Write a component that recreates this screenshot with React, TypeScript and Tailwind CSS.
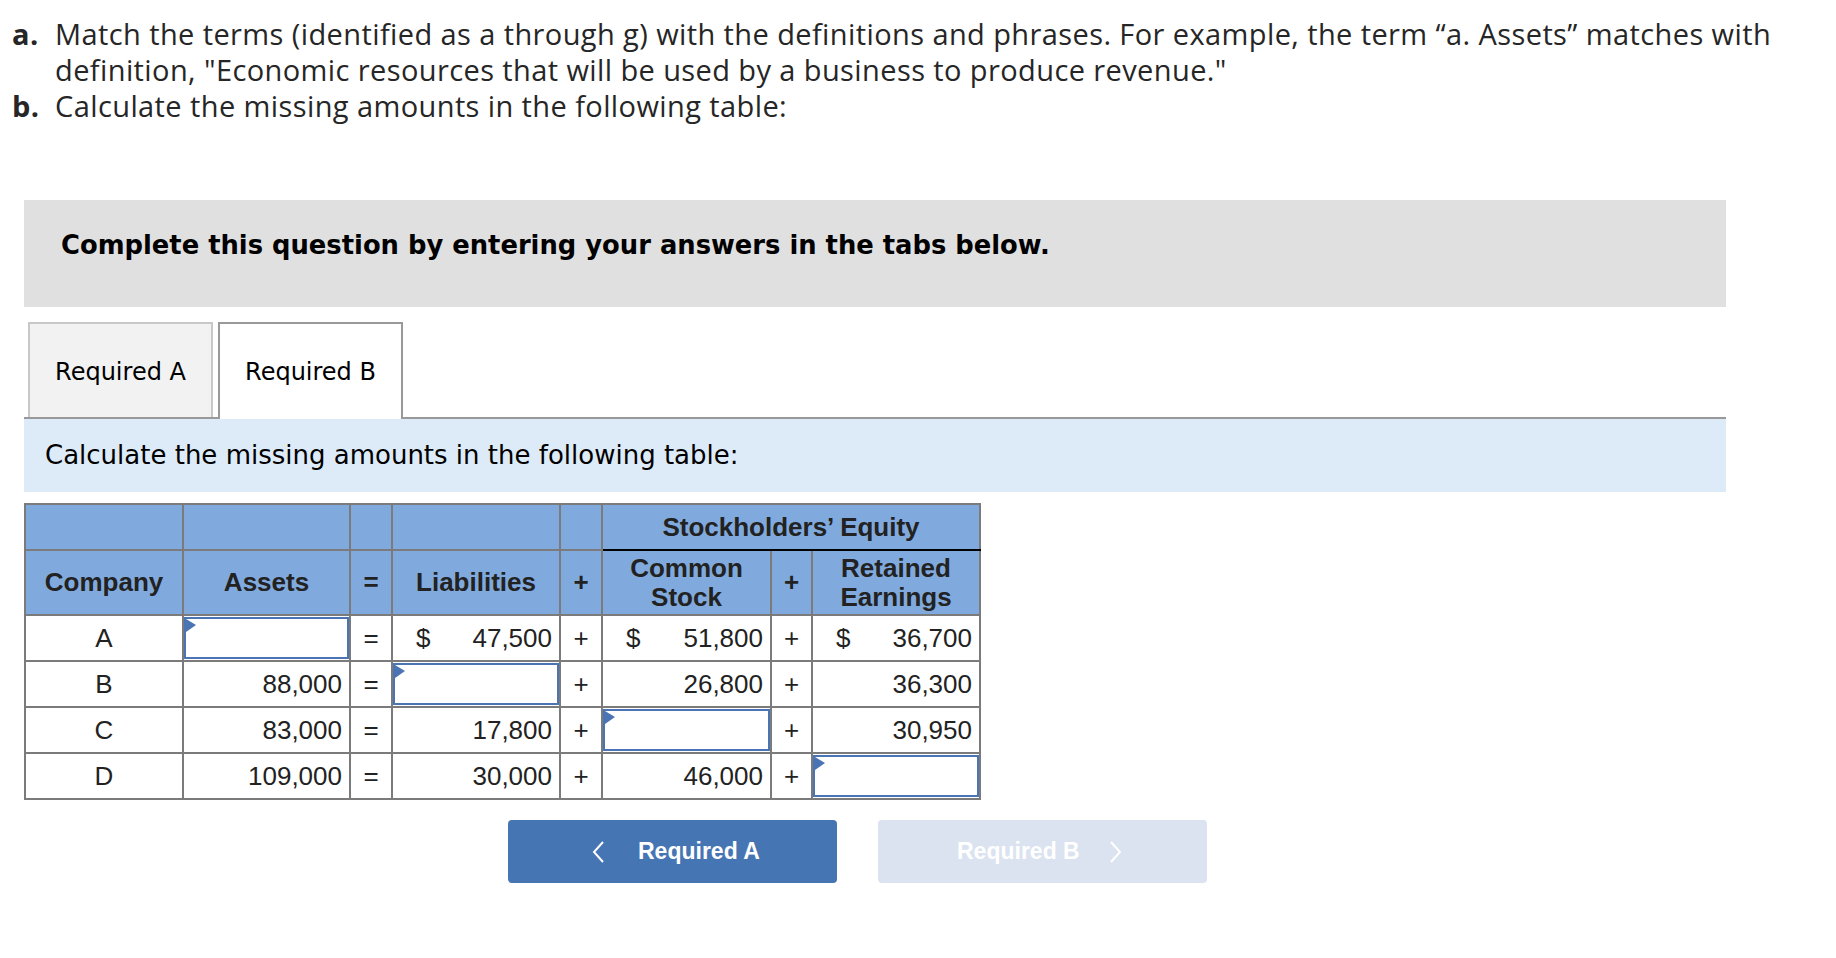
import React from 'react'

type Cell = { v: string | null; dollar?: boolean }

const rows: { co: string; cells: Cell[] }[] = [
    { co: 'A', cells: [{ v: null }, { v: '47,500', dollar: true }, { v: '51,800', dollar: true }, { v: '36,700', dollar: true }] },
    { co: 'B', cells: [{ v: '88,000' }, { v: null }, { v: '26,800' }, { v: '36,300' }] },
    { co: 'C', cells: [{ v: '83,000' }, { v: '17,800' }, { v: null }, { v: '30,950' }] },
    { co: 'D', cells: [{ v: '109,000' }, { v: '30,000' }, { v: '46,000' }, { v: null }] },
]

const bd = 'border-2 border-[#7b7b7b]'

function InputBox() {
    return (
        <div className="relative h-[42px] border-2 border-[#4a74b4] bg-white">
            <svg className="absolute left-0 top-0" width="10" height="14" viewBox="0 0 10 14">
                <polygon points="0,0 10,6 0,13" fill="#4a74b4" />
            </svg>
        </div>
    )
}

function ValueCell({ c }: { c: Cell }) {
    if (c.v === null) {
        return (
            <td className={`${bd} p-0`}>
                <InputBox />
            </td>
        )
    }
    return (
        <td className={`${bd} px-[7px]`}>
            <div className="flex justify-between">
                {c.dollar ? <span className="pl-[16px]">$</span> : <span />}
                <span>{c.v}</span>
            </div>
        </td>
    )
}

function Chevron({ dir }: { dir: 'left' | 'right' }) {
    return (
        <svg width="12" height="22" viewBox="0 0 12 22" fill="none" stroke="white" strokeWidth="2">
            {dir === 'left' ? <polyline points="11,1 2,11 11,21" /> : <polyline points="1,1 10,11 1,21" />}
        </svg>
    )
}

export default function App() {
    return (
        <div className="min-h-screen bg-white pb-10 text-[#222]">
            <div className="pl-3 pt-4 font-['Open_Sans',Arial,sans-serif] text-[29px] leading-[36px] tracking-[0.4px] text-[#262626]">
                <div className="flex">
                    <span className="w-[43px] shrink-0 font-bold">a.</span>
                    <div>
                        Match the terms (identified as a through g) with the definitions and phrases. For example, the term “a. Assets” matches with
                        <br />
                        definition, "Economic resources that will be used by a business to produce revenue."
                    </div>
                </div>
                <div className="flex">
                    <span className="w-[43px] shrink-0 font-bold">b.</span>
                    <div>Calculate the missing amounts in the following table:</div>
                </div>
            </div>

            <div className="ml-[24px] mt-[76px] w-[1702px]">
                <div className="h-[107px] bg-[#e0e0e0] pl-[37px] pt-[29px] font-['DejaVu_Sans',Verdana,sans-serif] text-[25.8px] font-bold leading-[32px] text-black">
                    Complete this question by entering your answers in the tabs below.
                </div>

                <div className="mt-[15px] flex items-end gap-[5px] border-b-2 border-[#999] pl-[4px] font-['DejaVu_Sans',Verdana,sans-serif] text-[24px] text-black">
                    <div className="flex h-[95px] w-[185px] items-center justify-center border-2 border-b-0 border-[#c8c8c8] bg-[#f2f2f2] pt-[2px]">
                        Required A
                    </div>
                    <div className="-mb-[2px] flex h-[97px] w-[185px] items-center justify-center border-2 border-b-0 border-[#999] bg-white">
                        Required B
                    </div>
                </div>

                <div className="flex h-[73px] items-center bg-[#ddebf8] pl-[21px] font-['DejaVu_Sans',Verdana,sans-serif] text-[26px] text-black">
                    Calculate the missing amounts in the following table:
                </div>

                <table className="mt-[11px] w-[955px] table-fixed border-collapse font-['Liberation_Sans',Arial,sans-serif] text-[26px] leading-[29px] text-[#222]">
                    <colgroup>
                        <col className="w-[158px]" />
                        <col className="w-[167px]" />
                        <col className="w-[42px]" />
                        <col className="w-[168px]" />
                        <col className="w-[42px]" />
                        <col className="w-[169px]" />
                        <col className="w-[41px]" />
                        <col className="w-[168px]" />
                    </colgroup>
                    <thead className="bg-[#80aade] font-bold">
                        <tr className="h-[46px]">
                            <th className={bd} />
                            <th className={bd} />
                            <th className={bd} />
                            <th className={bd} />
                            <th className={bd} />
                            <th colSpan={3} className={`${bd} border-b-black`}>
                                Stockholders’ Equity
                            </th>
                        </tr>
                        <tr className="h-[65px]">
                            <th className={bd}>Company</th>
                            <th className={bd}>Assets</th>
                            <th className={bd}>=</th>
                            <th className={bd}>Liabilities</th>
                            <th className={bd}>+</th>
                            <th className={bd}>
                                Common
                                <br />
                                Stock
                            </th>
                            <th className={bd}>+</th>
                            <th className={bd}>
                                Retained
                                <br />
                                Earnings
                            </th>
                        </tr>
                    </thead>
                    <tbody className="bg-white">
                        {rows.map((r) => (
                            <tr key={r.co} className="h-[46px]">
                                <td className={`${bd} text-center`}>{r.co}</td>
                                <ValueCell c={r.cells[0]} />
                                <td className={`${bd} text-center`}>=</td>
                                <ValueCell c={r.cells[1]} />
                                <td className={`${bd} text-center`}>+</td>
                                <ValueCell c={r.cells[2]} />
                                <td className={`${bd} text-center`}>+</td>
                                <ValueCell c={r.cells[3]} />
                            </tr>
                        ))}
                    </tbody>
                </table>

                <div className="ml-[484px] mt-[20px] flex gap-[41px] font-['Liberation_Sans',Arial,sans-serif] text-[23px] font-bold text-white">
                    <button className="flex h-[63px] w-[329px] items-center gap-[34px] rounded-[4px] bg-[#4675b3] pl-[84px]">
                        <Chevron dir="left" />
                        <span>Required A</span>
                    </button>
                    <button className="flex h-[63px] w-[329px] items-center gap-[30px] rounded-[4px] bg-[#dae3ef] pl-[79px]">
                        <span>Required B</span>
                        <Chevron dir="right" />
                    </button>
                </div>
            </div>
        </div>
    )
}
